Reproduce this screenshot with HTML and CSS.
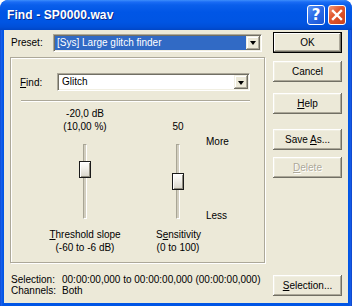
FILE: index.html
```
<!DOCTYPE html>
<html>
<head>
<meta charset="utf-8">
<link rel="stylesheet" href="styles.css">
</head>
<body>
<div class="window">
  <div class="titlebar">
    <span class="title">Find - SP0000.wav</span>
    <div class="tb-buttons">
      <span class="tb tb-help">?</span>
      <span class="tb tb-close"><svg width="12" height="12" viewBox="0 0 12 12"><path d="M2 2 L10 10 M10 2 L2 10" stroke="#fff" stroke-width="2.4" stroke-linecap="square"/></svg></span>
    </div>
  </div>
  <div class="client">
    <div class="main">
      <div class="left">
        <div class="preset-row">
          <span class="lbl preset-lbl">Preset:</span>
          <div class="combo preset-combo">
            <div class="combo-field selected">[Sys] Large glitch finder</div>
            <div class="combo-btn"><span class="tri"></span></div>
          </div>
        </div>
        <div class="panel">
          <div class="find-row">
            <span class="lbl find-lbl"><u>F</u>ind:</span>
            <div class="combo find-combo">
              <div class="combo-field">Glitch</div>
              <div class="combo-btn"><span class="tri"></span></div>
            </div>
          </div>
          <div class="sep"></div>
          <div class="sliders">
            <div class="c1 r1">-20,0 dB</div>
            <div class="c1 r2">(10,00 %)</div>
            <div class="c2 r2">50</div>
            <div class="c1 r3 slider"><div class="track"></div><div class="thumb thumb1"></div></div>
            <div class="c2 r3 slider"><div class="track"></div><div class="thumb thumb2"></div></div>
            <div class="c3 r3 ends"><span>More</span><span>Less</span></div>
            <div class="c1 r4"><u>T</u>hreshold slope</div>
            <div class="c1 r5">(-60 to -6 dB)</div>
            <div class="c2 r4">S<u>e</u>nsitivity</div>
            <div class="c2 r5">(0 to 100)</div>
          </div>
        </div>
      </div>
      <div class="right">
        <div class="btn default"><span>OK</span></div>
        <div class="btn b-cancel"><span>Cancel</span></div>
        <div class="btn b-help"><span><u>H</u>elp</span></div>
        <div class="btn b-save"><span>Save <u>A</u>s...</span></div>
        <div class="btn b-delete disabled"><span><u>D</u>elete</span></div>
      </div>
    </div>
    <div class="bottom">
      <div class="info">
        <span>Selection:</span><span>00:00:00,000 to 00:00:00,000 (00:00:00,000)</span>
        <span>Channels:</span><span>Both</span>
      </div>
      <div class="btn b-sel"><span><u>S</u>election...</span></div>
    </div>
  </div>
</div>
</body>
</html>
```
FILE: styles.css
```
html, body {
  margin: 0;
  padding: 0;
  background: #ffffff;
}
.window {
  width: 352px;
  height: 306px;
  box-sizing: border-box;
  display: flex;
  flex-direction: column;
  background: linear-gradient(90deg, #0842C8 0, #1C63EE 1px, #0055E5 3px, #0055E5 349px, #1C5EE8 351px, #0638B8 352px);
  border-radius: 8px 8px 0 0;
  font-family: "Liberation Sans", Arial, sans-serif;
  font-size: 10px;
  color: #000;
  overflow: hidden;
}
.titlebar {
  height: 30px;
  flex: none;
  display: flex;
  align-items: center;
  justify-content: space-between;
  padding: 0 6px 0 7px;
  background: linear-gradient(#3D8EFB 0, #1A6CF5 2px, #0A5FEB 5px, #0056E6 12px, #0055E3 22px, #004FD8 27px, #0046C6 30px);
  border-radius: 8px 8px 0 0;
}
.title {
  color: #fff;
  font-weight: bold;
  font-size: 12px;
  text-shadow: 1px 1px 0 #0A2A8C;
  letter-spacing: 0.1px;
}
.tb-buttons {
  display: flex;
  gap: 3px;
  margin-top: -1px;
}
.tb {
  width: 18px;
  height: 20px;
  box-sizing: border-box;
  border: 1px solid #fff;
  border-radius: 3px;
  display: flex;
  align-items: center;
  justify-content: center;
  color: #fff;
}
.tb-help {
  background: linear-gradient(135deg, #5A93F5 0, #2B6BE8 45%, #1A55D4 100%);
  font-weight: bold;
  font-size: 15px;
  font-family: "DejaVu Sans", sans-serif;
}
.tb-close {
  background: linear-gradient(135deg, #F09A7A 0, #E2582E 40%, #C8401A 100%);
}
.client {
  flex: 1;
  margin: 0 4px 4px;
  background: #ECE9D8;
  display: flex;
  flex-direction: column;
  padding: 2px 6px 7px 6px;
}
.main {
  display: flex;
  gap: 8px;
}
.left {
  width: 255px;
  display: flex;
  flex-direction: column;
}
.right {
  width: 69px;
  display: flex;
  flex-direction: column;
}
.preset-row {
  height: 21px;
  display: flex;
  align-items: center;
}
.lbl {
  display: block;
}
.preset-lbl {
  width: 42px;
  margin-left: 1px;
}
.combo {
  height: 18px;
  box-sizing: border-box;
  display: flex;
  border-style: solid;
  border-width: 1px;
  border-color: #ACA899 #FFFFFF #FFFFFF #ACA899;
  box-shadow: inset 1px 1px 0 #716F64, inset -1px -1px 0 #F1EFE2;
  background: #fff;
  padding: 1px;
}
.preset-combo {
  width: 209px;
}
.combo-field {
  flex: 1;
  line-height: 14px;
  padding-left: 2px;
  white-space: nowrap;
  overflow: hidden;
}
.combo-field.selected {
  background: #316AC5;
  color: #fff;
}
.combo-btn {
  width: 14px;
  box-sizing: border-box;
  background: #ECE9D8;
  box-shadow: inset -1px -1px 0 #716F64, inset 1px 1px 0 #F1EFE2, inset -2px -2px 0 #ACA899, inset 2px 2px 0 #fff;
  display: flex;
  align-items: center;
  justify-content: center;
}
.tri {
  width: 0;
  height: 0;
  border-left: 3.5px solid transparent;
  border-right: 3.5px solid transparent;
  border-top: 4px solid #000;
  margin-top: 1px;
}
.panel {
  margin-top: 4px;
  height: 206px;
  box-sizing: border-box;
  border: 1px solid #ACA899;
  box-shadow: inset 1px 1px 0 #fff, 1px 1px 0 #fff;
  padding: 15px 14px 0 9px;
}
.find-row {
  display: flex;
  align-items: center;
  height: 18px;
}
.find-lbl {
  width: 37px;
}
.find-combo {
  width: 193px;
}
.find-combo .combo-field {
  padding-left: 3px;
}
.sep {
  margin: 9px 0 0 1px;
  border-top: 1px solid #ACA899;
  border-bottom: 1px solid #fff;
  height: 0;
}
.sliders {
  margin-top: 5px;
  display: grid;
  grid-template-columns: 130px 44px 1fr;
  column-gap: 6px;
  grid-template-rows: 13px 13px 95px 13px 13px;
  line-height: 13px;
}
.sliders > div {
  text-align: center;
  white-space: nowrap;
}
.c1 { grid-column: 1; }
.c2 { grid-column: 2; }
.c3 { grid-column: 3; }
.r1 { grid-row: 1; }
.r2 { grid-row: 2; }
.r3 { grid-row: 3; }
.r4 { grid-row: 4; }
.r5 { grid-row: 5; }
.slider {
  position: relative;
  display: flex;
  justify-content: center;
}
.track {
  margin-top: 11px;
  width: 4px;
  height: 75px;
  box-sizing: border-box;
  background: #D2CEBF;
  border-left: 1px solid #A8A595;
  border-right: 1px solid #fff;
  border-top: 1px solid #A8A595;
  border-bottom: 1px solid #fff;
}
.thumb {
  position: absolute;
  left: 50%;
  margin-left: -6px;
  width: 12px;
  height: 17px;
  box-sizing: border-box;
  border: 1px solid #1A1A1A;
  background: linear-gradient(#FFFFFF 0, #F4F3EE 35%, #D8D5CA 100%);
  box-shadow: inset 1px 1px 0 #fff, inset -1px -1px 0 #8E8B7E;
}
.thumb1 { top: 28px; }
.thumb2 { top: 40px; }
.sliders > .ends {
  display: flex;
  flex-direction: column;
  justify-content: space-between;
  text-align: left;
  padding: 2px 0 6px 0;
}
.btn {
  height: 21px;
  width: 69px;
  box-sizing: border-box;
  background: #ECE9D8;
  display: flex;
  align-items: center;
  justify-content: center;
  box-shadow: inset -1px -1px 0 #716F64, inset 1px 1px 0 #fff, inset -2px -2px 0 #ACA899, inset 2px 2px 0 #F1EFE2;
  white-space: nowrap;
}
.btn.default {
  box-shadow: inset 0 0 0 1px #000, inset -2px -2px 0 #716F64, inset 2px 2px 0 #fff, inset -3px -3px 0 #ACA899;
}
.b-cancel { margin-top: 8px; }
.b-help { margin-top: 11px; }
.b-save { margin-top: 15px; }
.b-delete { margin-top: 7px; }
.btn.disabled {
  color: #ACA899;
  text-shadow: 1px 1px 0 #fff;
}
.bottom {
  margin-top: 11px;
  display: flex;
  align-items: center;
  justify-content: space-between;
}
.info {
  margin-left: 1px;
  display: grid;
  grid-template-columns: 51px auto;
  line-height: 11px;
  white-space: nowrap;
}
```
